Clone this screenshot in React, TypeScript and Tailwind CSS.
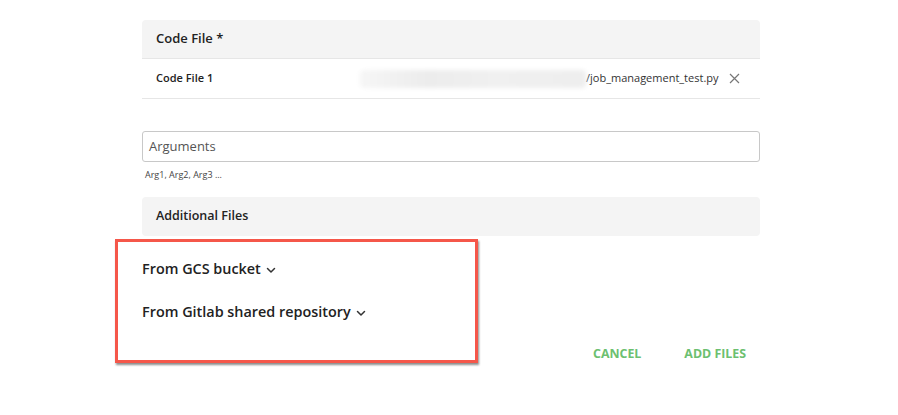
import React from "react";

const Chevron = () => (
  <svg width="10" height="10" viewBox="0 0 10 10" className="ml-[5px] mt-[2px]">
    <path d="M1.5 3.5 L5 7 L8.5 3.5" fill="none" stroke="#333" strokeWidth="1.5" strokeLinecap="round" strokeLinejoin="round" />
  </svg>
);

export default function App() {
  return (
    <div className="w-[898px] h-[415px] bg-white overflow-hidden relative" style={{ fontFamily: '"Open Sans", sans-serif' }}>
      <div className="pt-[20px] pl-[142px] w-[760px]">
        <div className="w-[618px]">
          <div className="h-[39px] bg-[#f4f4f4] rounded-t-[4px] border-b border-[#e6e6e6] flex items-center pl-[14px] text-[13px] font-semibold text-[#222]">
            Code File *
          </div>
          <div className="h-[40px] border-b border-[#e6e6e6] flex items-center pl-[14px] text-[11px] font-semibold text-[#222]">
            <span className="w-[204px]">Code File 1</span>
            <div className="w-[226px] h-[18px] bg-[linear-gradient(90deg,#f6f6f6,#ececec_30%,#f0f0f0_60%,#eeeeee)] blur-[2px] rounded-sm" />
            <span className="text-[11px] font-normal text-[#333]">/job_management_test.py</span>
            <svg width="11" height="11" viewBox="0 0 11 11" className="ml-[10px]">
              <path d="M1 1 L10 10 M10 1 L1 10" stroke="#777" strokeWidth="1.2" />
            </svg>
          </div>
          <div className="mt-[32px] h-[31px] border border-[#c8c8c8] rounded-[3px] flex items-center pl-[6px] text-[13px] text-[#555]">
            Arguments
          </div>
          <div className="mt-[6px] pl-[3px] text-[9px] text-[#444]">Arg1, Arg2, Arg3 ...</div>
          <div className="mt-[15px] h-[39px] bg-[#f4f4f4] rounded-[4px] flex items-center pl-[14px] text-[12.5px] font-semibold text-[#222]">
            Additional Files
          </div>
        </div>
      </div>
      <div className="flex items-start">
        <div className="ml-[115px] mt-[3px] w-[363px] h-[124px] border-[3px] border-[#f5574a] shadow-[1px_2px_2px_rgba(0,0,0,0.45)] pl-[24px] pt-[16px]">
          <div className="flex items-center text-[14.4px] font-semibold text-[#222] h-[22px]">
            From GCS bucket
            <Chevron />
          </div>
          <div className="flex items-center text-[14.4px] font-semibold text-[#222] h-[22px] mt-[21px]">
            From Gitlab shared repository
            <Chevron />
          </div>
        </div>
        <div className="mt-[109px] ml-[115px] flex items-center text-[12.4px] font-bold text-[#6cc070]">
          <span>CANCEL</span>
          <span className="ml-[43px]">ADD FILES</span>
        </div>
      </div>
    </div>
  );
}
